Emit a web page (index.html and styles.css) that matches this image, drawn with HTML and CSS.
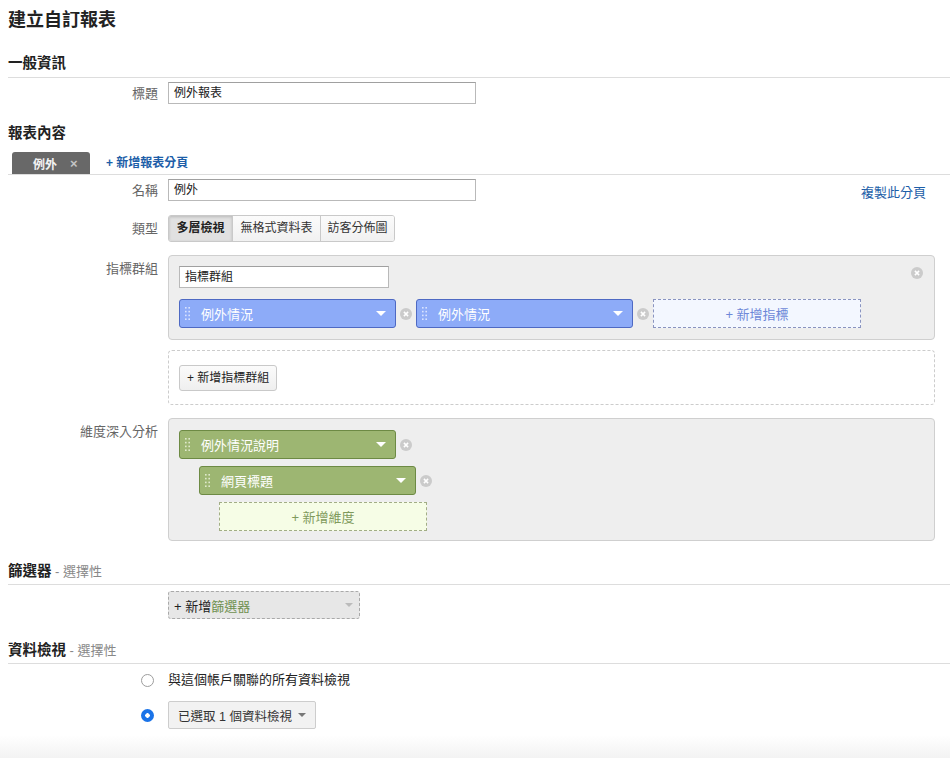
FILE: index.html
```html
<!DOCTYPE html>
<html lang="zh-Hant">
<head>
<meta charset="utf-8">
<title>建立自訂報表</title>
<link rel="stylesheet" href="styles.css">
</head>
<body>
<div class="page">
  <h1 class="title">建立自訂報表</h1>

  <h2 class="sec sec-first">一般資訊</h2>
  <div class="row row-title">
    <div class="lbl">標題</div>
    <div class="field"><div class="txt">例外報表</div></div>
  </div>

  <h2 class="sec sec-content">報表內容</h2>
  <div class="tabs">
    <div class="tab"><span class="tab-name">例外</span><span class="tab-x">×</span></div>
    <a class="add-tab">+ 新增報表分頁</a>
  </div>

  <div class="row row-name">
    <div class="lbl">名稱</div>
    <div class="field field-split">
      <div class="txt">例外</div>
      <a class="copy">複製此分頁</a>
    </div>
  </div>

  <div class="row row-type">
    <div class="lbl">類型</div>
    <div class="field">
      <div class="seg">
        <span class="seg-btn on">多層檢視</span>
        <span class="seg-btn mid">無格式資料表</span>
        <span class="seg-btn last">訪客分佈圖</span>
      </div>
    </div>
  </div>

  <div class="row row-metrics">
    <div class="lbl lbl-top">指標群組</div>
    <div class="field">
      <div class="box metric-box">
        <svg class="xc box-close" viewBox="0 0 12 12"><circle cx="6" cy="6" r="6" fill="#cbcbcb"/><path d="M3.9 3.9l4.2 4.2M8.1 3.9l-4.2 4.2" stroke="#fff" stroke-width="1.5"/></svg>
        <div class="txt txt-group">指標群組</div>
        <div class="chip-line">
          <div class="chip chip-blue">
            <svg class="grip" viewBox="0 0 5 13"><g fill="#d9e3ff"><rect x="0" y="0" width="1.6" height="1.6"/><rect x="3.4" y="0" width="1.6" height="1.6"/><rect x="0" y="3.8" width="1.6" height="1.6"/><rect x="3.4" y="3.8" width="1.6" height="1.6"/><rect x="0" y="7.6" width="1.6" height="1.6"/><rect x="3.4" y="7.6" width="1.6" height="1.6"/><rect x="0" y="11.4" width="1.6" height="1.6"/><rect x="3.4" y="11.4" width="1.6" height="1.6"/></g></svg>
            <span class="chip-text">例外情況</span>
            <span class="caret"></span>
          </div>
          <svg class="xc" viewBox="0 0 12 12"><circle cx="6" cy="6" r="6" fill="#cbcbcb"/><path d="M3.9 3.9l4.2 4.2M8.1 3.9l-4.2 4.2" stroke="#fff" stroke-width="1.5"/></svg>
          <div class="chip chip-blue">
            <svg class="grip" viewBox="0 0 5 13"><g fill="#d9e3ff"><rect x="0" y="0" width="1.6" height="1.6"/><rect x="3.4" y="0" width="1.6" height="1.6"/><rect x="0" y="3.8" width="1.6" height="1.6"/><rect x="3.4" y="3.8" width="1.6" height="1.6"/><rect x="0" y="7.6" width="1.6" height="1.6"/><rect x="3.4" y="7.6" width="1.6" height="1.6"/><rect x="0" y="11.4" width="1.6" height="1.6"/><rect x="3.4" y="11.4" width="1.6" height="1.6"/></g></svg>
            <span class="chip-text">例外情況</span>
            <span class="caret"></span>
          </div>
          <svg class="xc" viewBox="0 0 12 12"><circle cx="6" cy="6" r="6" fill="#cbcbcb"/><path d="M3.9 3.9l4.2 4.2M8.1 3.9l-4.2 4.2" stroke="#fff" stroke-width="1.5"/></svg>
          <div class="add-slot add-metric">+ 新增指標</div>
        </div>
      </div>
    </div>
  </div>

  <div class="row row-addgroup">
    <div class="lbl"></div>
    <div class="field">
      <div class="box-dashed">
        <span class="btn">+ 新增指標群組</span>
      </div>
    </div>
  </div>

  <div class="row row-dims">
    <div class="lbl lbl-top">維度深入分析</div>
    <div class="field">
      <div class="box dim-box">
        <div class="chip-line">
          <div class="chip chip-green">
            <svg class="grip" viewBox="0 0 5 13"><g fill="#dfe9cc"><rect x="0" y="0" width="1.6" height="1.6"/><rect x="3.4" y="0" width="1.6" height="1.6"/><rect x="0" y="3.8" width="1.6" height="1.6"/><rect x="3.4" y="3.8" width="1.6" height="1.6"/><rect x="0" y="7.6" width="1.6" height="1.6"/><rect x="3.4" y="7.6" width="1.6" height="1.6"/><rect x="0" y="11.4" width="1.6" height="1.6"/><rect x="3.4" y="11.4" width="1.6" height="1.6"/></g></svg>
            <span class="chip-text">例外情況說明</span>
            <span class="caret"></span>
          </div>
          <svg class="xc" viewBox="0 0 12 12"><circle cx="6" cy="6" r="6" fill="#cbcbcb"/><path d="M3.9 3.9l4.2 4.2M8.1 3.9l-4.2 4.2" stroke="#fff" stroke-width="1.5"/></svg>
        </div>
        <div class="chip-line indent1">
          <div class="chip chip-green">
            <svg class="grip" viewBox="0 0 5 13"><g fill="#dfe9cc"><rect x="0" y="0" width="1.6" height="1.6"/><rect x="3.4" y="0" width="1.6" height="1.6"/><rect x="0" y="3.8" width="1.6" height="1.6"/><rect x="3.4" y="3.8" width="1.6" height="1.6"/><rect x="0" y="7.6" width="1.6" height="1.6"/><rect x="3.4" y="7.6" width="1.6" height="1.6"/><rect x="0" y="11.4" width="1.6" height="1.6"/><rect x="3.4" y="11.4" width="1.6" height="1.6"/></g></svg>
            <span class="chip-text">網頁標題</span>
            <span class="caret"></span>
          </div>
          <svg class="xc" viewBox="0 0 12 12"><circle cx="6" cy="6" r="6" fill="#cbcbcb"/><path d="M3.9 3.9l4.2 4.2M8.1 3.9l-4.2 4.2" stroke="#fff" stroke-width="1.5"/></svg>
        </div>
        <div class="chip-line indent2">
          <div class="add-slot add-dim">+ 新增維度</div>
        </div>
      </div>
    </div>
  </div>

  <h2 class="sec sec-filter">篩選器<span class="opt"> - 選擇性</span></h2>
  <div class="row row-filter">
    <div class="lbl"></div>
    <div class="field">
      <div class="filter-dd"><span class="plus">+ 新增</span><span class="green">篩選器</span><span class="caret caret-grey"></span></div>
    </div>
  </div>

  <h2 class="sec sec-views">資料檢視<span class="opt"> - 選擇性</span></h2>
  <div class="row row-radio1">
    <div class="lbl lbl-radio"><span class="radio"></span></div>
    <div class="field"><span class="radio-text">與這個帳戶關聯的所有資料檢視</span></div>
  </div>
  <div class="row row-radio2">
    <div class="lbl lbl-radio"><span class="radio checked"></span></div>
    <div class="field">
      <div class="view-dd"><span>已選取 1 個資料檢視</span><span class="caret caret-dark"></span></div>
    </div>
  </div>
</div>
<div class="fade"></div>
</body>
</html>
```

FILE: styles.css
```css
* { box-sizing: border-box; }

body {
  margin: 0;
  background: #fff;
  color: #333;
  font-family: "Liberation Sans", "Noto Sans CJK TC", sans-serif;
  font-size: 13px;
}

.page {
  padding: 8px 0 0 8px;
}

.title {
  margin: 0;
  font-size: 18px;
  line-height: 24px;
  font-weight: bold;
  color: #222;
}

.sec {
  margin: 21px 0 0;
  font-size: 14.5px;
  line-height: 20px;
  height: 20px;
  font-weight: bold;
  color: #222;
  display: flex;
  align-items: baseline;
}

.sec-first {
  height: 25px;
  padding-bottom: 4px;
  border-bottom: 1px solid #ddd;
}

.sec-content { margin-top: 19px; }

.sec-filter {
  margin-top: 20px;
  height: 24px;
  padding-bottom: 3px;
  border-bottom: 1px solid #ddd;
}

.sec-views {
  margin-top: 21px;
  height: 24px;
  padding-bottom: 3px;
  border-bottom: 1px solid #ddd;
}

.opt {
  font-weight: normal;
  font-size: 13px;
  line-height: 20px;
  color: #888;
  white-space: pre;
}

.row {
  display: grid;
  grid-template-columns: 160px 1fr;
  padding-right: 15px;
}

.lbl {
  text-align: right;
  padding-right: 10px;
  padding-top: 2px;
  color: #666;
  font-size: 13px;
  line-height: 20px;
}

.lbl-top { padding-top: 4px; }

.field { min-width: 0; }

.txt {
  width: 308px;
  height: 22px;
  border: 1px solid #b9b9b9;
  border-top-color: #a0a0a0;
  background: #fff;
  padding: 1px 5px 0;
  font-size: 12px;
  line-height: 19px;
  color: #222;
}

.row-title { margin-top: 4px; }

/* tabs */
.tabs {
  margin-top: 9px;
  display: flex;
  align-items: flex-end;
  border-bottom: 1px solid #ddd;
  height: 23px;
  padding-left: 4px;
}

.tab {
  width: 78px;
  height: 22px;
  background: #686868;
  border-radius: 3px 3px 0 0;
  display: flex;
  align-items: center;
  padding-left: 21px;
  font-size: 12px;
  font-weight: bold;
  color: #f2f2f2;
}

.tab-x {
  margin-left: 13px;
  color: #c4c4c4;
  font-size: 13px;
  font-weight: bold;
}

.add-tab {
  margin-left: 16px;
  align-self: center;
  font-size: 12px;
  font-weight: bold;
  color: #1d5ea8;
  line-height: 22px;
}

.row-name { margin-top: 4px; }

.field-split {
  display: flex;
  justify-content: space-between;
  align-items: center;
}

.copy {
  margin-right: 9px;
  margin-top: 3px;
  color: #1d5ea8;
  font-size: 13px;
}

/* segmented */
.row-type { margin-top: 14px; }
.row-type .lbl { padding-top: 4px; }

.seg {
  display: inline-flex;
  height: 27px;
  border: 1px solid #c9c9c9;
  border-radius: 3px;
  overflow: hidden;
}

.seg-btn {
  width: 63px;
  text-align: center;
  line-height: 25px;
  font-size: 12px;
  color: #333;
  background: linear-gradient(#fbfbfb, #f1f1f1);
  border-left: 1px solid #c9c9c9;
}

.seg-btn.on {
  border-left: 0;
  background: #e1e1e1;
  box-shadow: inset 0 1px 3px rgba(0, 0, 0, 0.18);
  font-weight: bold;
  color: #222;
}

.seg-btn.mid { width: 88px; }
.seg-btn.last { width: 74px; }

/* boxes */
.row-metrics { margin-top: 13px; }

.box {
  position: relative;
  background: #eeeeee;
  border: 1px solid #cfcfcf;
  border-radius: 4px;
  padding: 10px;
}

.metric-box {
  height: 85px;
}

.box-close {
  position: absolute;
  top: 11px;
  right: 11px;
}

.txt-group {
  width: 210px;
}

.chip-line {
  display: flex;
  align-items: center;
}

.metric-box .chip-line { margin-top: 11px; }

.chip {
  display: flex;
  align-items: center;
  width: 217px;
  height: 29px;
  border: 1px solid;
  border-radius: 3px;
  padding: 0 9px 0 5px;
  color: #fff;
  font-size: 13px;
}

.chip-blue {
  background: #8dabf8;
  border-color: #4e69c3;
}

.chip-green {
  background: #9db672;
  border-color: #6d8a44;
}

.grip {
  width: 5px;
  height: 13px;
  margin-right: 11px;
  flex: none;
}

.chip-text {
  flex: 1;
  line-height: 27px;
  padding-top: 1px;
}

.caret {
  width: 0;
  height: 0;
  border-left: 5px solid transparent;
  border-right: 5px solid transparent;
  border-top: 5px solid #fff;
}

.xc {
  width: 12px;
  height: 12px;
  margin: 0 4px;
  flex: none;
}

.box-close { margin: 0; }

.add-slot {
  width: 208px;
  height: 29px;
  border: 1px dashed;
  display: flex;
  align-items: center;
  justify-content: center;
  font-size: 13px;
}

.add-metric {
  background: #f3f7ff;
  border-color: #8a94c0;
  color: #6d88d8;
}

.add-dim {
  background: #f6fde6;
  border-color: #a2ad86;
  color: #7f9a5c;
}

.row-addgroup { margin-top: 10px; }

.box-dashed {
  height: 55px;
  border: 1px dashed #cccccc;
  border-radius: 4px;
  padding: 14px 10px 0;
}

.btn {
  display: inline-block;
  height: 26px;
  line-height: 24px;
  padding: 0 7px;
  border: 1px solid #c9c9c9;
  border-radius: 3px;
  background: linear-gradient(#fbfbfb, #efefef);
  font-size: 12px;
  color: #222;
}

.row-dims { margin-top: 13px; }

.dim-box {
  height: 123px;
  padding-top: 11px;
}

.indent1 { margin-top: 7px; padding-left: 20px; }
.indent2 { margin-top: 7px; padding-left: 40px; }

/* filter */
.row-filter { margin-top: 6px; }

.filter-dd {
  width: 192px;
  height: 28px;
  background: #e7e7e7;
  border: 1px dashed #a9a9a9;
  border-radius: 3px;
  display: flex;
  align-items: center;
  padding: 0 6px 0 5px;
  font-size: 13px;
}

.plus {
  color: #222;
}

.green {
  color: #6f9050;
  flex: 1;
}

.caret-grey {
  border-left-width: 4px;
  border-right-width: 4px;
  border-top: 4px solid #bbb;
}

/* views */
.row-radio1 { margin-top: 5px; }
.row-radio2 { margin-top: 10px; }

.lbl-radio {
  display: flex;
  justify-content: flex-end;
  align-items: center;
  padding-top: 0;
  padding-right: 14px;
}

.radio {
  width: 13px;
  height: 13px;
  border-radius: 50%;
  border: 1px solid #9d9d9d;
  background: #fff;
}

.radio.checked {
  border: 0;
  background: radial-gradient(circle, #fff 0 2px, #1a73e8 2.5px);
}

.radio-text {
  display: block;
  font-size: 13px;
  line-height: 22px;
  color: #222;
}

.view-dd {
  display: inline-flex;
  align-items: center;
  width: 148px;
  height: 28px;
  border: 1px solid #cdcdcd;
  border-radius: 2px;
  background: #f2f2f2;
  padding: 0 9px;
  font-size: 12.5px;
  color: #333;
  justify-content: space-between;
}

.caret-dark {
  border-left-width: 4px;
  border-right-width: 4px;
  border-top: 4px solid #777;
}

.fade {
  margin-top: 6px;
  height: 30px;
  background: linear-gradient(#ffffff, #efefef);
}
```
